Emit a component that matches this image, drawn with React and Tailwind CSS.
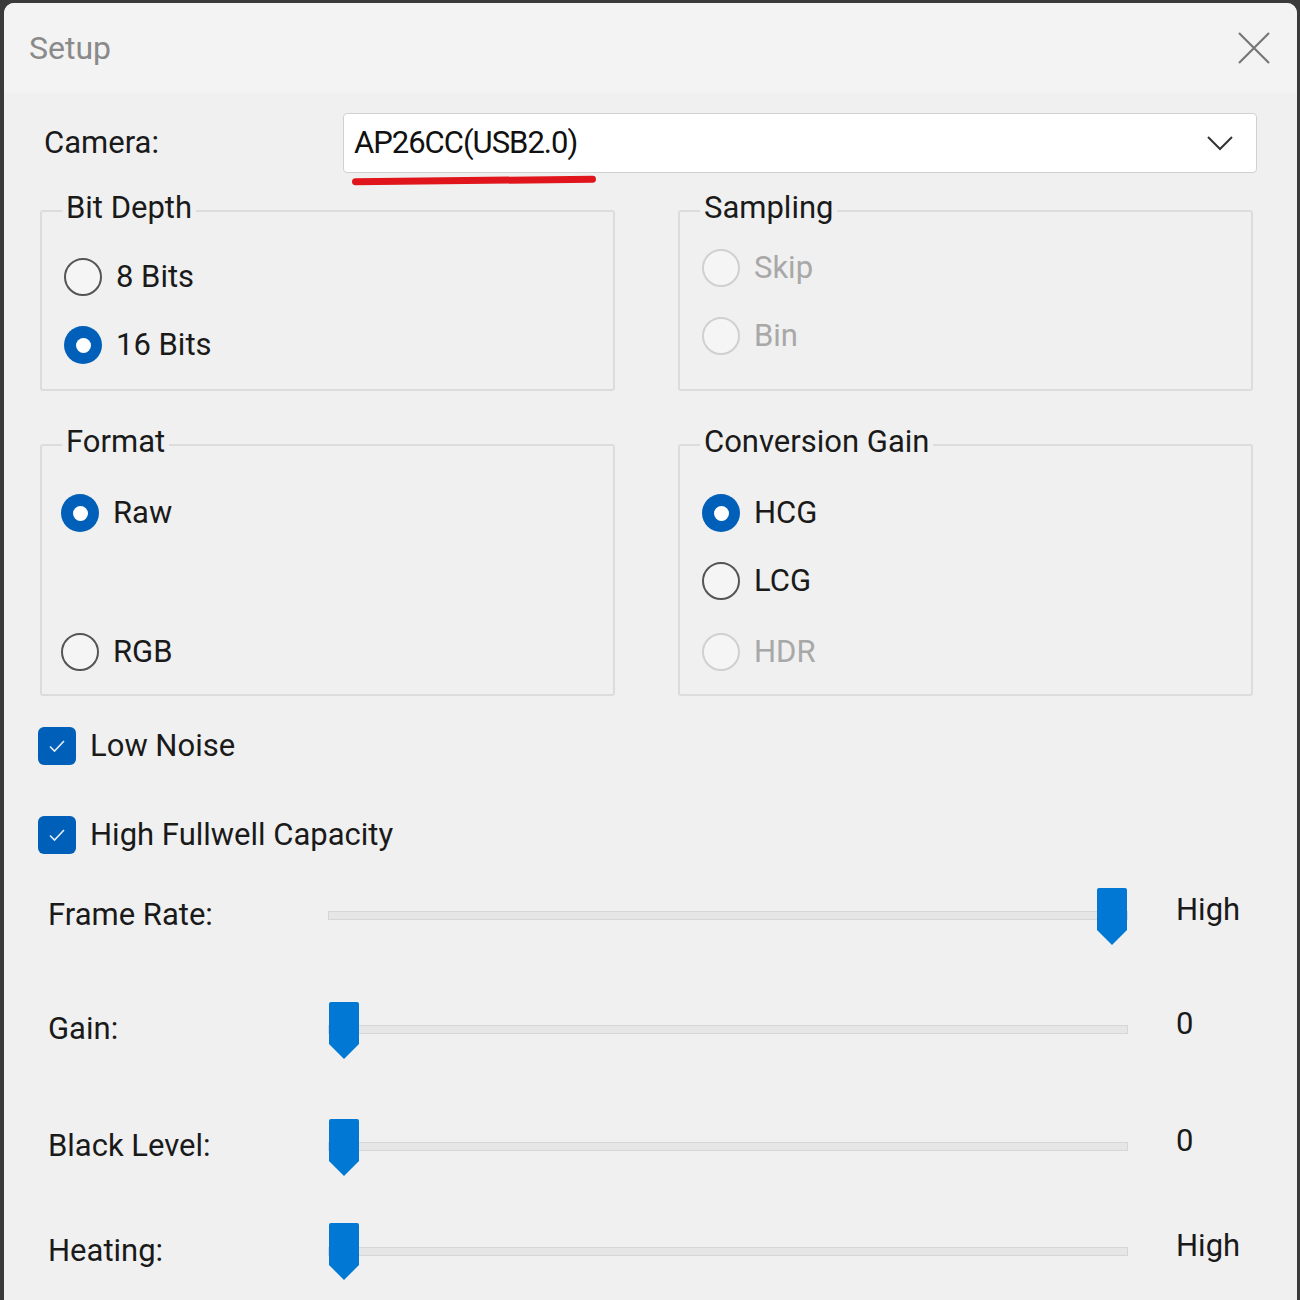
import React from "react";

const font = { fontFamily: "'Segoe UI', Roboto, 'Liberation Sans', sans-serif" };

function Radio({ label, checked, disabled }) {
  return (
    <div className="flex items-center h-[68px]">
      {checked ? (
        <span className="w-[38px] h-[38px] rounded-full bg-[#005fb8] flex items-center justify-center">
          <span className="w-[15px] h-[15px] rounded-full bg-white" />
        </span>
      ) : (
        <span className={`w-[38px] h-[38px] rounded-full border-[2px] ${disabled ? "border-[#d0d0d0] bg-[#f5f5f5]" : "border-[#555] bg-[#f5f5f5]"}`} />
      )}
      <span className={`ml-[14px] text-[31px] ${disabled ? "text-[#a8a8a8]" : "text-[#1a1a1a]"}`}>{label}</span>
    </div>
  );
}

function Group({ title, className, children }) {
  return (
    <div className={`relative border-[2px] border-[#dcdcdc] rounded-[3px] ${className}`}>
      <span className="absolute -top-[24px] left-[20px] px-[4px] bg-[#f0f0f0] text-[31px] leading-[40px] text-[#1a1a1a]">{title}</span>
      <div className="pl-[22px]">{children}</div>
    </div>
  );
}

function Check({ label }) {
  return (
    <div className="flex items-center">
      <span className="w-[38px] h-[38px] rounded-[6px] bg-[#005fb8] flex items-center justify-center">
        <svg width="22" height="22" viewBox="0 0 22 22"><path d="M4 11.5l4.5 4.5L18 6" fill="none" stroke="#e6eef8" strokeWidth="1.6" /></svg>
      </span>
      <span className="ml-[14px] text-[31px] text-[#1a1a1a]">{label}</span>
    </div>
  );
}

function Slider({ label, value, pos, h }) {
  return (
    <div className={`flex items-center ${h}`}>
      <span className="w-[324px] pl-[44px] text-[31px] text-[#1a1a1a]">{label}</span>
      <div className="relative w-[800px] h-[60px] flex items-center">
        <div className="w-full h-[9px] bg-[#e6e6e6] border border-[#d6d6d6]" />
        <svg className="absolute top-[2px]" style={{ left: pos }} width="32" height="58" viewBox="0 0 32 58">
          <path d="M1 2a2 2 0 012-2h26a2 2 0 012 2v40L16 57 1 42z" fill="#0078d4" />
        </svg>
      </div>
      <span className="ml-[48px] text-[31px] text-[#1a1a1a] -mt-[10px]">{value}</span>
    </div>
  );
}

export default function App() {
  return (
    <div style={font} className="w-[1300px] h-[1300px] bg-[#3a3a3a] pt-[3px] pl-[4px] pr-[3px]">
      <div className="h-full bg-[#f0f0f0] rounded-tl-[10px] rounded-tr-[10px] overflow-hidden">
        <div className="h-[90px] bg-[#f3f3f3] flex items-center justify-between pl-[25px] pr-[26px]">
          <span className="text-[32px] text-[#8a8a8a]">Setup</span>
          <svg width="34" height="34" viewBox="0 0 34 34"><path d="M2 2l30 30M32 2L2 32" stroke="#777" strokeWidth="2.2" /></svg>
        </div>
        <div className="flex items-center h-[88px] pl-[40px] pt-[12px]">
          <span className="w-[299px] text-[31px] text-[#1a1a1a]">Camera:</span>
          <div className="relative w-[914px] h-[60px] bg-white border border-[#d0d0d0] rounded-[4px] flex items-center justify-between pl-[10px] pr-[22px]">
            <span className="text-[31px] text-[#111] tracking-[-1px]">AP26CC(USB2.0)</span>
            <svg width="28" height="16" viewBox="0 0 28 16"><path d="M2 2l12 12L26 2" fill="none" stroke="#333" strokeWidth="2" /></svg>
            <span className="absolute left-[8px] -bottom-[12px] w-[244px] h-[7px] rounded-full bg-[#e0151b] -rotate-[0.6deg]" />
          </div>
        </div>
        <div className="grid grid-cols-[575px_575px] gap-x-[63px] pl-[36px] mt-[29px]">
          <Group className="h-[181px] pt-[31px]" title="Bit Depth">
            <Radio label="8 Bits" />
            <Radio label="16 Bits" checked />
          </Group>
          <Group className="h-[181px] pt-[22px]" title="Sampling">
            <Radio label="Skip" disabled />
            <Radio label="Bin" disabled />
          </Group>
          <Group className="h-[252px] mt-[53px] pt-[33px]" title="Format">
            <div className="-ml-[3px]">
              <Radio label="Raw" checked />
              <div className="h-[71px]" />
              <Radio label="RGB" />
            </div>
          </Group>
          <Group className="h-[252px] mt-[53px] pt-[33px]" title="Conversion Gain">
            <Radio label="HCG" checked />
            <Radio label="LCG" />
            <div className="mt-[3px]"><Radio label="HDR" disabled /></div>
          </Group>
        </div>
        <div className="pl-[34px] mt-[27px] flex flex-col gap-[42px]">
          <Check label="Low Noise" />
          <Check label="High Fullwell Capacity" />
        </div>
        <div className="mt-[6px]">
          <Slider label="Frame Rate:" value="High" pos="768px" h="h-[103px]" />
          <Slider label="Gain:" value="0" pos="0px" h="h-[125px]" />
          <Slider label="Black Level:" value="0" pos="0px" h="h-[109px]" />
          <Slider label="Heating:" value="High" pos="0px" h="h-[100px]" />
        </div>
      </div>
    </div>
  );
}
